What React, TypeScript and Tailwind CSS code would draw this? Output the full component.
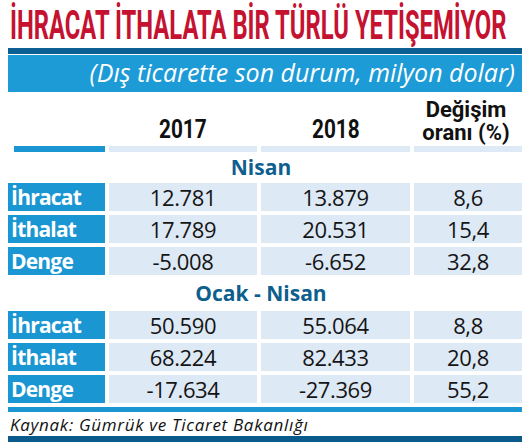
const sections = [
  {
    title: 'Nisan',
    h: 'h-[31px]',
    rows: [
      { label: 'İhracat', a: '12.781', b: '13.879', c: '8,6' },
      { label: 'İthalat', a: '17.789', b: '20.531', c: '15,4' },
      { label: 'Denge', a: '-5.008', b: '-6.652', c: '32,8' },
    ],
  },
  {
    title: 'Ocak - Nisan',
    h: 'h-[36px]',
    rows: [
      { label: 'İhracat', a: '50.590', b: '55.064', c: '8,8' },
      { label: 'İthalat', a: '68.224', b: '82.433', c: '20,8' },
      { label: 'Denge', a: '-17.634', b: '-27.369', c: '55,2' },
    ],
  },
];

const cols = 'grid grid-cols-[97px_148px_149px_108px] gap-x-[4px]';

const App = () => {
  return (
    <div className="w-[530px] h-[445px] bg-white overflow-hidden font-['Open_Sans',sans-serif]">
      {/* Title */}
      <div className="h-[48px] px-[10px] flex items-center">
        <span className="inline-block origin-left scale-x-[0.595] whitespace-nowrap font-['Roboto',sans-serif] font-bold text-[40px] leading-none text-[#c41230] pt-[3px]">
          İHRACAT İTHALATA BİR TÜRLÜ YETİŞEMİYOR
        </span>
      </div>

      <div className="px-[8px]">
        <div className="h-[6px] bg-[#0c5f93]" />
        <div className="h-[1px]" />
        <div className="h-[37px] bg-[#1d9bd7] flex items-center justify-end pr-[7px]">
          <span className="italic text-white text-[25px] leading-none pb-[3px]">
            (Dış ticarette son durum, milyon dolar)
          </span>
        </div>

        {/* Column heads */}
        <div className={`${cols} h-[54px] items-end`}>
          <div />
          <div className="text-center pb-[2px]">
            <span className="inline-block scale-x-[0.8] font-['Roboto',sans-serif] font-bold text-[26px] leading-none text-[#111]">2017</span>
          </div>
          <div className="text-center pb-[2px]">
            <span className="inline-block scale-x-[0.8] font-['Roboto',sans-serif] font-bold text-[26px] leading-none text-[#111]">2018</span>
          </div>
          <div className="text-center pr-[4px]">
            <span className="inline-block font-['Roboto',sans-serif] font-bold text-[22px] leading-[23px] text-[#111]">
              Değişim
              <br />
              oranı (%)
            </span>
          </div>
        </div>
        <div className={`${cols} h-[6px]`}>
          <div className="ml-[6px] bg-[#1a96d3]" />
          <div className="bg-[#dde9f5]" />
          <div className="bg-[#dde9f5]" />
          <div className="bg-[#dde9f5]" />
        </div>

        {sections.map((s) => (
          <div key={s.title}>
            <div className={`${s.h} flex items-center justify-center pr-[8px] font-bold text-[21px] leading-none text-[#0e5f8e]`}>
              {s.title}
            </div>
            <div className="flex flex-col gap-[4px]">
              {s.rows.map((r) => (
                <div key={r.label} className={`${cols} h-[28px]`}>
                  <div className="bg-[#1a96d3] text-white font-bold text-[21px] leading-none flex items-center pl-[3px] tracking-[-0.8px]">
                    {r.label}
                  </div>
                  <div className="bg-[#dde9f5] text-[#151515] text-[22px] leading-none flex items-center justify-center tracking-[-0.4px]">
                    {r.a}
                  </div>
                  <div className="bg-[#dde9f5] text-[#151515] text-[22px] leading-none flex items-center justify-center tracking-[-0.4px]">
                    {r.b}
                  </div>
                  <div className="bg-[#dde9f5] text-[#151515] text-[22px] leading-none flex items-center justify-center tracking-[-0.4px]">
                    {r.c}
                  </div>
                </div>
              ))}
            </div>
          </div>
        ))}

        <div className="mt-[4px] h-[5px] bg-[#1a96d3]" />
        <div className="h-[24px] flex items-center pl-[2px] italic text-[17px] leading-none tracking-[0.7px] text-[#111]">
          Kaynak: Gümrük ve Ticaret Bakanlığı
        </div>
        <div className="h-[6px] bg-[#0a5b8c]" />
      </div>
    </div>
  );
};

export default App;
